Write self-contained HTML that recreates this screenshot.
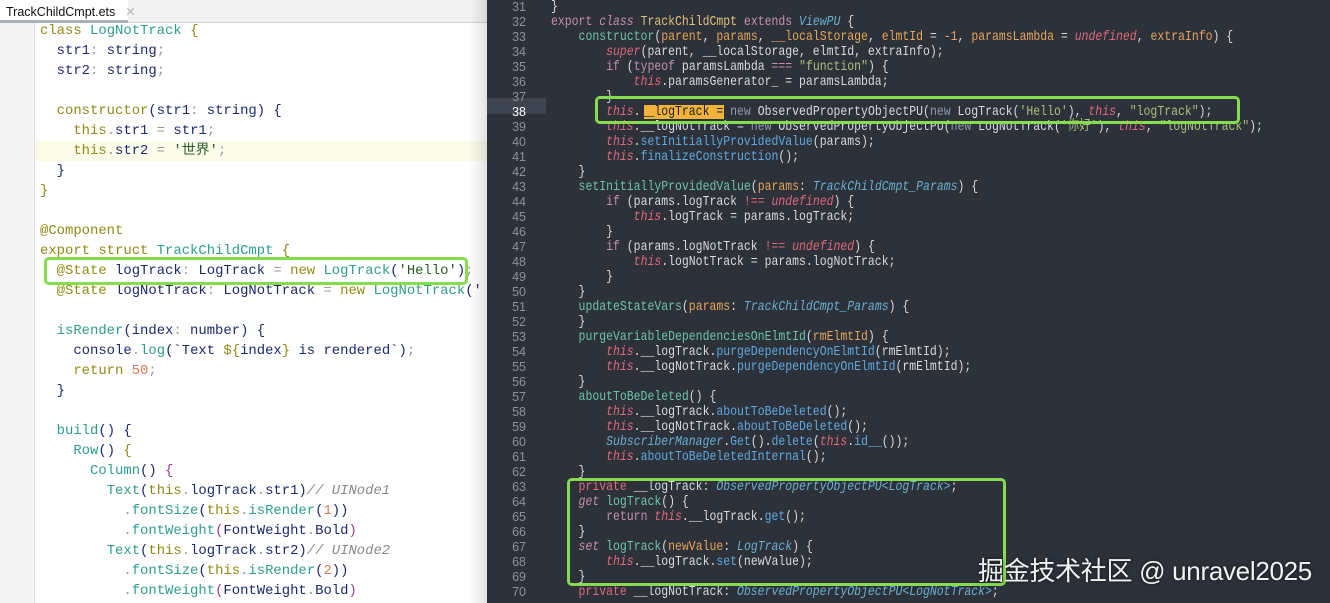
<!DOCTYPE html>
<html><head><meta charset="utf-8"><style>
*{margin:0;padding:0;box-sizing:border-box}
body{width:1330px;height:603px;overflow:hidden;position:relative;background:#fff;font-family:"Liberation Mono","Noto Sans CJK SC",monospace}
#L{position:absolute;left:0;top:0;width:488px;height:603px;background:#fff;overflow:hidden}
#tabbar{position:absolute;left:0;top:0;width:488px;height:23px;background:#f2f2f2;border-bottom:1px solid #d0d0d0}
#tab{position:absolute;left:0;top:0;width:128px;height:23px;background:#fff;border-bottom:3px solid #a9b0bb;font:12.5px "Liberation Sans",sans-serif;color:#111;padding:4px 0 0 6px}
#tab span{color:#bbb;margin-left:10px}
#gut{position:absolute;left:0;top:23px;width:35px;height:580px;background:#f5f5f5;border-right:1px solid #ddd}
.ll{position:absolute;left:40px;height:20px;line-height:20px;font-size:13.9px;white-space:pre;color:#1a2a6c}
.cur{position:absolute;left:0;top:141px;width:488px;height:20px;background:#fbfbea}
.ol{color:#8f8a14}.te{color:#2e9d8c}.gr{color:#999}.nu{color:#e0785a}.cm{color:#888;font-style:italic}.pu{color:#a03a9c}.st{color:#2a5a2a}
#shadow{position:absolute;left:470px;top:0;width:18px;height:603px;background:linear-gradient(90deg,rgba(0,0,0,0),rgba(0,0,0,.12))}
#R{position:absolute;left:487px;top:0;width:843px;height:603px;background:#2c313a;overflow:hidden}
.n{position:absolute;left:0;width:39px;text-align:right;font-size:12.5px;color:#8a929c;height:15px;line-height:15px;font-family:"Liberation Sans Narrow","Liberation Sans",sans-serif}
.rl{position:absolute;left:64px;height:15px;line-height:15px;font-size:14px;white-space:pre;color:#d7dbe0;transform:scaleX(0.82);transform-origin:0 0}
.k{color:#c58fae}.y{color:#e2c07a}.b{color:#6ab0d0;font-style:italic}.g{color:#6cc4ad}.o{color:#e5a45a}.r{color:#e0687a;font-style:italic}.rr{color:#e0687a}.s{color:#a7c27a}.w{color:#8d9bb0}.m{color:#5fa9e0}.i{font-style:italic}
.box{position:absolute;border:3px solid #86dc4e;border-radius:5px}
#wm{position:absolute;left:978px;top:551px;font:26px "Liberation Sans","Noto Sans CJK SC",sans-serif;color:#f2f2f2;text-shadow:0 0 3px rgba(0,0,0,.6);white-space:nowrap;letter-spacing:-0.3px}
</style></head><body>
<div id="L">
<div id="tabbar"></div><div id="tab">TrackChildCmpt.ets<span>✕</span></div>
<div class="cur"></div>
<div id="gut"></div>
<div class="ll" style="top:21px"><span class="ol">class</span> <span class="te">LogNotTrack</span> <span class="ol">{</span></div>
<div class="ll" style="top:41px">  str1<span class="gr">:</span> string<span class="gr">;</span></div>
<div class="ll" style="top:61px">  str2<span class="gr">:</span> string<span class="gr">;</span></div>
<div class="ll" style="top:101px">  <span class="ol">constructor</span>(str1<span class="gr">:</span> string) {</div>
<div class="ll" style="top:121px">    <span class="ol">this</span><span class="gr">.</span>str1 <span class="gr">=</span> str1<span class="gr">;</span></div>
<div class="ll" style="top:141px">    <span class="ol">this</span><span class="gr">.</span>str2 <span class="gr">=</span> <span class="st">'世界'</span><span class="gr">;</span></div>
<div class="ll" style="top:161px">  }</div>
<div class="ll" style="top:181px"><span class="ol">}</span></div>
<div class="ll" style="top:221px"><span class="ol">@Component</span></div>
<div class="ll" style="top:241px"><span class="ol">export struct</span> <span class="te">TrackChildCmpt</span> <span class="ol">{</span></div>
<div class="ll" style="top:261px">  <span class="ol">@State</span> logTrack<span class="gr">:</span> LogTrack <span class="gr">=</span> <span class="ol">new</span> <span class="te">LogTrack</span>(<span class="st">'Hello'</span>)<span class="gr">;</span></div>
<div class="ll" style="top:281px">  <span class="ol">@State</span> logNotTrack<span class="gr">:</span> LogNotTrack <span class="gr">=</span> <span class="ol">new</span> <span class="te">LogNotTrack</span>('</div>
<div class="ll" style="top:321px">  <span class="te">isRender</span>(index<span class="gr">:</span> number) {</div>
<div class="ll" style="top:341px">    console<span class="gr">.</span><span class="te">log</span>(`Text <span class="ol">${</span>index<span class="ol">}</span> is rendered`)<span class="gr">;</span></div>
<div class="ll" style="top:361px">    <span class="ol">return</span> <span class="nu">50</span><span class="gr">;</span></div>
<div class="ll" style="top:381px">  }</div>
<div class="ll" style="top:421px">  <span class="te">build</span>() {</div>
<div class="ll" style="top:441px">    <span class="te">Row</span>() <span class="ol">{</span></div>
<div class="ll" style="top:461px">      <span class="te">Column</span>() <span class="pu">{</span></div>
<div class="ll" style="top:481px">        <span class="te">Text</span>(<span class="ol">this</span><span class="gr">.</span>logTrack<span class="gr">.</span>str1)<span class="cm">// UINode1</span></div>
<div class="ll" style="top:501px">          <span class="gr">.</span><span class="te">fontSize</span>(<span class="ol">this</span><span class="gr">.</span><span class="te">isRender</span>(<span class="nu">1</span>))</div>
<div class="ll" style="top:521px">          <span class="gr">.</span><span class="te">fontWeight</span><span class="pu">(</span>FontWeight<span class="gr">.</span>Bold<span class="pu">)</span></div>
<div class="ll" style="top:541px">        <span class="te">Text</span>(<span class="ol">this</span><span class="gr">.</span>logTrack<span class="gr">.</span>str2)<span class="cm">// UINode2</span></div>
<div class="ll" style="top:561px">          <span class="gr">.</span><span class="te">fontSize</span>(<span class="ol">this</span><span class="gr">.</span><span class="te">isRender</span>(<span class="nu">2</span>))</div>
<div class="ll" style="top:581px">          <span class="gr">.</span><span class="te">fontWeight</span><span class="pu">(</span>FontWeight<span class="gr">.</span>Bold<span class="pu">)</span></div>
<div class="box" style="left:44px;top:257px;width:424px;height:28px"></div>
<div id="shadow"></div>
</div>
<div id="R">
<div style="position:absolute;left:0;top:98px;width:59px;height:16px;background:#3d4550"></div>
<div style="position:absolute;left:157px;top:105px;width:80px;height:14px;background:#f2b33d"></div>
<div class="n" style="top:0">31</div><div class="n" style="top:15px">32</div><div class="n" style="top:30px">33</div><div class="n" style="top:45px">34</div><div class="n" style="top:60px">35</div><div class="n" style="top:75px">36</div><div class="n" style="top:90px">37</div><div class="n" style="top:105px;color:#fff">38</div><div class="n" style="top:120px">39</div><div class="n" style="top:135px">40</div><div class="n" style="top:150px">41</div><div class="n" style="top:165px">42</div><div class="n" style="top:180px">43</div><div class="n" style="top:195px">44</div><div class="n" style="top:210px">45</div><div class="n" style="top:225px">46</div><div class="n" style="top:240px">47</div><div class="n" style="top:255px">48</div><div class="n" style="top:270px">49</div><div class="n" style="top:285px">50</div><div class="n" style="top:300px">51</div><div class="n" style="top:315px">52</div><div class="n" style="top:330px">53</div><div class="n" style="top:345px">54</div><div class="n" style="top:360px">55</div><div class="n" style="top:375px">56</div><div class="n" style="top:390px">57</div><div class="n" style="top:405px">58</div><div class="n" style="top:420px">59</div><div class="n" style="top:435px">60</div><div class="n" style="top:450px">61</div><div class="n" style="top:465px">62</div><div class="n" style="top:480px">63</div><div class="n" style="top:495px">64</div><div class="n" style="top:510px">65</div><div class="n" style="top:525px">66</div><div class="n" style="top:540px">67</div><div class="n" style="top:555px">68</div><div class="n" style="top:570px">69</div><div class="n" style="top:585px">70</div>
<div class="rl" style="top:0">}</div>
<div class="rl" style="top:15px"><span class="k">export</span> <span class="k i">class</span> <span class="y">TrackChildCmpt</span> <span class="k">extends</span> <span class="b">ViewPU</span> {</div>
<div class="rl" style="top:30px">    <span class="g">constructor</span>(<span class="o">parent</span>, <span class="o">params</span>, <span class="o">__localStorage</span>, <span class="o">elmtId</span> = <span class="o">-1</span>, <span class="o">paramsLambda</span> = <span class="r">undefined</span>, <span class="o">extraInfo</span>) {</div>
<div class="rl" style="top:45px">        <span class="r">super</span>(parent, __localStorage, elmtId, extraInfo);</div>
<div class="rl" style="top:60px">        <span class="k">if</span> (<span class="k">typeof</span> paramsLambda <span class="k">===</span> <span class="s">"function"</span>) {</div>
<div class="rl" style="top:75px">            <span class="r">this</span>.paramsGenerator_ = paramsLambda;</div>
<div class="rl" style="top:90px">        }</div>
<div class="rl" style="top:105px">        <span class="r">this</span>.<span style="color:#222">__logTrack =</span> <span class="w">new</span> ObservedPropertyObjectPU(<span class="w">new</span> LogTrack(<span class="s">'Hello'</span>), <span class="r">this</span>, <span class="s">"logTrack"</span>);</div>
<div class="rl" style="top:120px">        <span class="r">this</span>.__logNotTrack = <span class="w">new</span> ObservedPropertyObjectPU(<span class="w">new</span> LogNotTrack(<span class="s">'你好'</span>), <span class="r">this</span>, <span class="s">"logNotTrack"</span>);</div>
<div class="rl" style="top:135px">        <span class="r">this</span>.<span class="m">setInitiallyProvidedValue</span>(params);</div>
<div class="rl" style="top:150px">        <span class="r">this</span>.<span class="m">finalizeConstruction</span>();</div>
<div class="rl" style="top:165px">    }</div>
<div class="rl" style="top:180px">    <span class="g">setInitiallyProvidedValue</span>(<span class="o">params</span>: <span class="b">TrackChildCmpt_Params</span>) {</div>
<div class="rl" style="top:195px">        <span class="k">if</span> (params.logTrack <span class="rr">!==</span> <span class="r">undefined</span>) {</div>
<div class="rl" style="top:210px">            <span class="r">this</span>.logTrack = params.logTrack;</div>
<div class="rl" style="top:225px">        }</div>
<div class="rl" style="top:240px">        <span class="k">if</span> (params.logNotTrack <span class="rr">!==</span> <span class="r">undefined</span>) {</div>
<div class="rl" style="top:255px">            <span class="r">this</span>.logNotTrack = params.logNotTrack;</div>
<div class="rl" style="top:270px">        }</div>
<div class="rl" style="top:285px">    }</div>
<div class="rl" style="top:300px">    <span class="g">updateStateVars</span>(<span class="o">params</span>: <span class="b">TrackChildCmpt_Params</span>) {</div>
<div class="rl" style="top:315px">    }</div>
<div class="rl" style="top:330px">    <span class="g">purgeVariableDependenciesOnElmtId</span>(<span class="o">rmElmtId</span>) {</div>
<div class="rl" style="top:345px">        <span class="r">this</span>.__logTrack.<span class="m">purgeDependencyOnElmtId</span>(rmElmtId);</div>
<div class="rl" style="top:360px">        <span class="r">this</span>.__logNotTrack.<span class="m">purgeDependencyOnElmtId</span>(rmElmtId);</div>
<div class="rl" style="top:375px">    }</div>
<div class="rl" style="top:390px">    <span class="g">aboutToBeDeleted</span>() {</div>
<div class="rl" style="top:405px">        <span class="r">this</span>.__logTrack.<span class="m">aboutToBeDeleted</span>();</div>
<div class="rl" style="top:420px">        <span class="r">this</span>.__logNotTrack.<span class="m">aboutToBeDeleted</span>();</div>
<div class="rl" style="top:435px">        <span class="b">SubscriberManager</span>.<span class="m">Get</span>().<span class="m">delete</span>(<span class="r">this</span>.<span class="m">id__</span>());</div>
<div class="rl" style="top:450px">        <span class="r">this</span>.<span class="m">aboutToBeDeletedInternal</span>();</div>
<div class="rl" style="top:465px">    }</div>
<div class="rl" style="top:480px">    <span class="rr">private</span> __logTrack: <span class="b">ObservedPropertyObjectPU&lt;LogTrack&gt;</span>;</div>
<div class="rl" style="top:495px">    <span class="k i">get</span> <span class="g">logTrack</span>() {</div>
<div class="rl" style="top:510px">        <span class="k">return</span> <span class="r">this</span>.__logTrack.<span class="m">get</span>();</div>
<div class="rl" style="top:525px">    }</div>
<div class="rl" style="top:540px">    <span class="k i">set</span> <span class="g">logTrack</span>(<span class="o">newValue</span>: <span class="b">LogTrack</span>) {</div>
<div class="rl" style="top:555px">        <span class="r">this</span>.__logTrack.<span class="m">set</span>(newValue);</div>
<div class="rl" style="top:570px">    }</div>
<div class="rl" style="top:585px">    <span class="rr">private</span> __logNotTrack: <span class="b">ObservedPropertyObjectPU&lt;LogNotTrack&gt;</span>;</div>
<div class="box" style="left:108px;top:96px;width:645px;height:28px"></div>
<div class="box" style="left:80px;top:478px;width:439px;height:108px"></div>
</div>
<div id="wm">掘金技术社区 @ unravel2025</div>
</body></html>
